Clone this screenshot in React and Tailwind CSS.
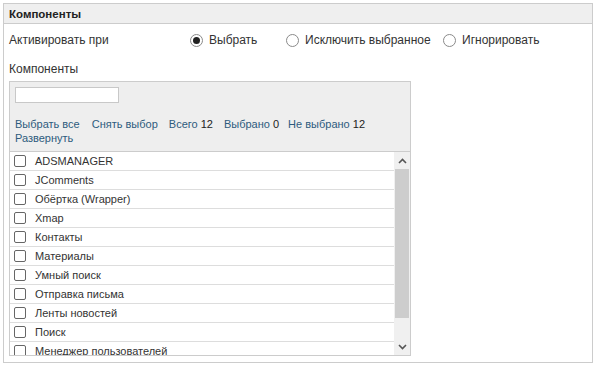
import React from 'react';

const items = [
  'ADSMANAGER',
  'JComments',
  'Обёртка (Wrapper)',
  'Xmap',
  'Контакты',
  'Материалы',
  'Умный поиск',
  'Отправка письма',
  'Ленты новостей',
  'Поиск',
  'Менеджер пользователей',
];

const Radio = ({ checked, label }) => (
  <label className="flex items-center gap-[6px]">
    <span className="w-[13px] h-[13px] rounded-full border border-[#8a8a8a] bg-white flex items-center justify-center">
      {checked && <span className="w-[7px] h-[7px] rounded-full bg-[#222]" />}
    </span>
    <span>{label}</span>
  </label>
);

const App = () => {
  return (
    <div
      className="w-[595px] h-[366px] bg-white p-[3px] text-[12px] text-[#333] leading-[14px]"
      style={{ fontFamily: '"Liberation Sans", Arial, sans-serif' }}
    >
      <div className="w-[590px] h-[360px] border border-[#cccccc]">
        <div className="h-[20px] bg-[#efefef] border-b border-[#cccccc] px-[5px] flex items-center font-bold text-[11.5px] text-[#222]">
          Компоненты
        </div>

        <div className="pl-[5px]">
          <div className="h-[16px] mt-[8px] flex items-center">
            <span className="w-[181px]">Активировать при</span>
            <div className="flex items-center gap-[10px]">
              <span className="w-[86px]">
                <Radio checked label="Выбрать" />
              </span>
              <span className="w-[147px]">
                <Radio label="Исключить выбранное" />
              </span>
              <Radio label="Игнорировать" />
            </div>
          </div>

          <div className="h-[14px] mt-[14px]">Компоненты</div>

          <div className="mt-[5px] w-[402px] border border-[#cccccc] bg-[#eeeeee] text-[11px]">
            <div className="px-[5px] pt-[5px]">
              <input
                type="text"
                className="w-[104px] h-[16px] bg-white border border-[#c8c8c8] outline-none"
              />
              <div className="mt-[14px] text-[#2d5b7d]">
                <div>
                  <span className="mr-[12px]">Выбрать все</span>
                  <span className="mr-[11px]">Снять выбор</span>
                  <span className="mr-[11px]">
                    Всего <span className="text-[#222]">12</span>
                  </span>
                  <span className="mr-[9px]">
                    Выбрано <span className="text-[#222]">0</span>
                  </span>
                  <span>
                    Не выбрано <span className="text-[#222]">12</span>
                  </span>
                </div>
                <div>Развернуть</div>
              </div>
            </div>

            <div className="mt-[6px] h-[204px] flex bg-white border-t border-[#cccccc]">
              <div className="flex-1 overflow-hidden">
                {items.map((name) => (
                  <div
                    key={name}
                    className="h-[19px] flex items-center pl-[4px] border-b border-[#dddddd] text-[#333]"
                  >
                    <span className="w-[12px] h-[12px] rounded-[2px] border border-[#666] bg-white shrink-0" />
                    <span className="ml-[9px]">{name}</span>
                  </div>
                ))}
              </div>
              <div className="w-[16px] bg-[#f0f0f0] flex flex-col">
                <div className="h-[17px] flex items-center justify-center">
                  <svg width="9" height="6" viewBox="0 0 9 6">
                    <path d="M1 5 L4.5 1.5 L8 5" fill="none" stroke="#555" strokeWidth="1.6" />
                  </svg>
                </div>
                <div className="mx-[1px] h-[149px] bg-[#cdcdcd]" />
                <div className="flex-1" />
                <div className="h-[17px] flex items-center justify-center">
                  <svg width="9" height="6" viewBox="0 0 9 6">
                    <path d="M1 1 L4.5 4.5 L8 1" fill="none" stroke="#555" strokeWidth="1.6" />
                  </svg>
                </div>
              </div>
            </div>
          </div>
        </div>
      </div>
    </div>
  );
};

export default App;
